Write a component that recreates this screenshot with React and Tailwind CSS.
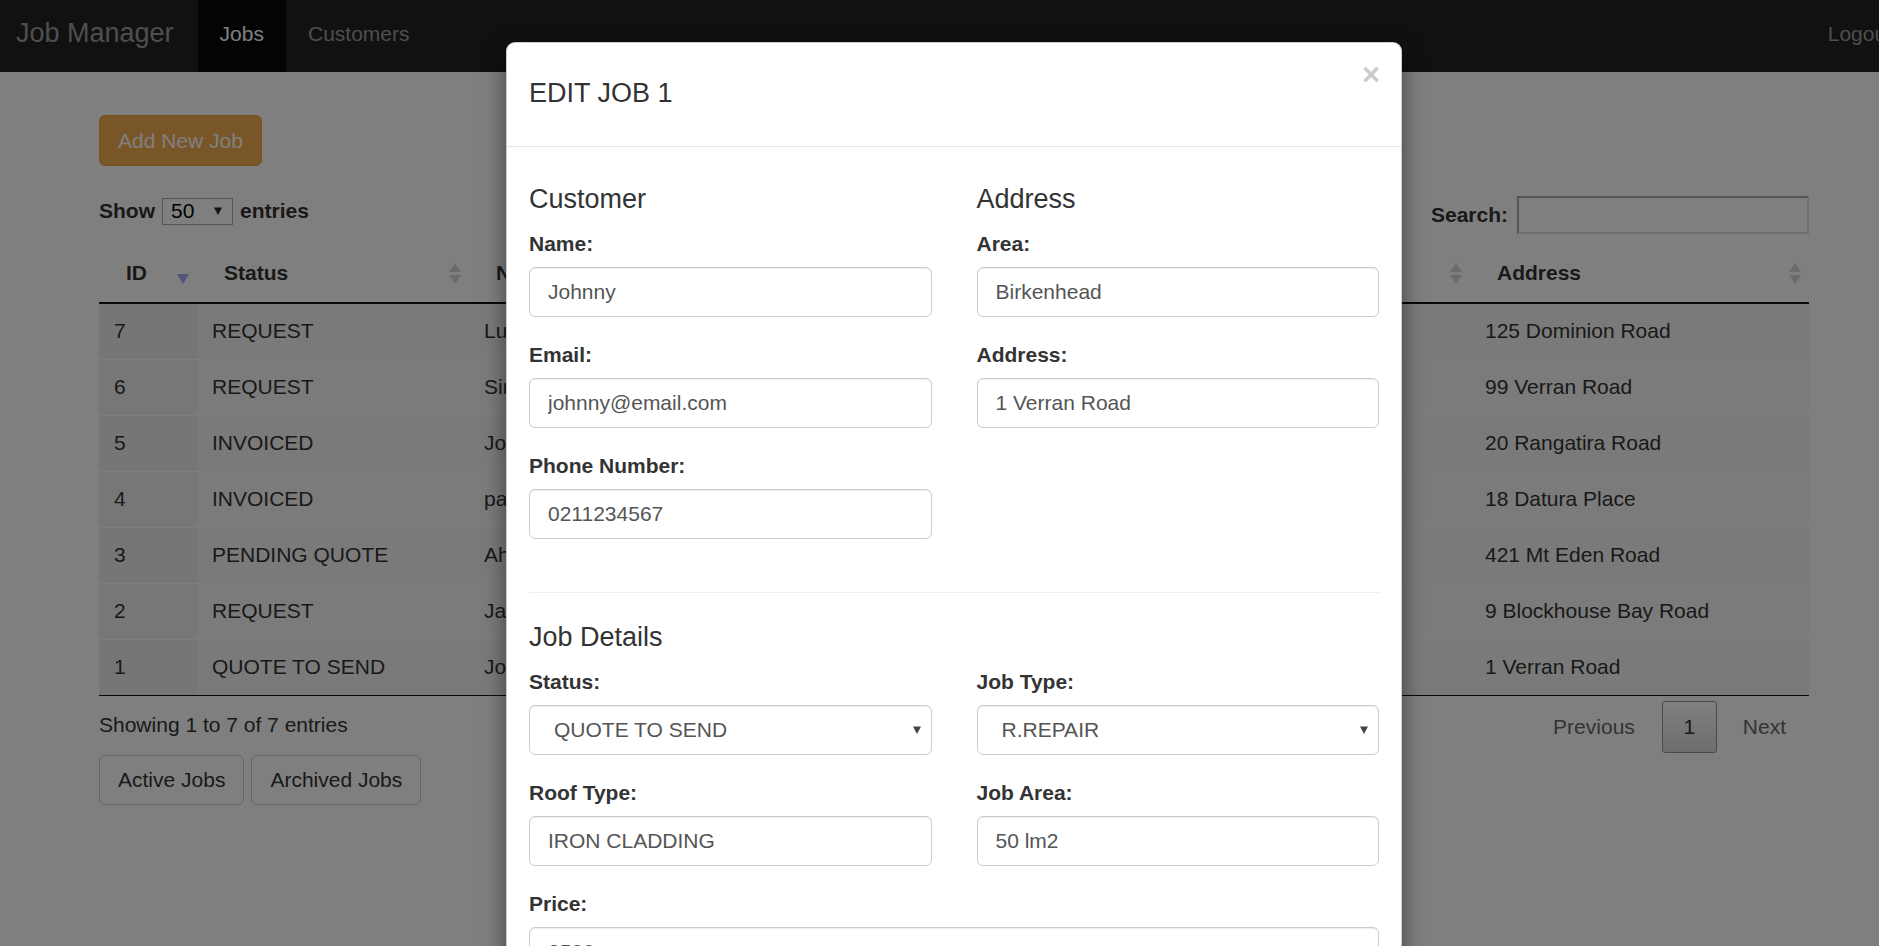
import React from "react";

const rows = [
  { id: 7, status: "REQUEST", name: "Luke Smith", email: "luke@email.com", phone: "0211112222", area: "Mt Eden", address: "125 Dominion Road" },
  { id: 6, status: "REQUEST", name: "Simon Lee", email: "simon@email.com", phone: "0213334444", area: "Avondale", address: "99 Verran Road" },
  { id: 5, status: "INVOICED", name: "John Brown", email: "john@email.com", phone: "0215556666", area: "Epsom", address: "20 Rangatira Road" },
  { id: 4, status: "INVOICED", name: "paul", email: "paul@email.com", phone: "0217778888", area: "Glenfield", address: "18 Datura Place" },
  { id: 3, status: "PENDING QUOTE", name: "Ahmed Khan", email: "ahmed@email.com", phone: "0219990000", area: "Mt Eden", address: "421 Mt Eden Road" },
  { id: 2, status: "REQUEST", name: "James Wong", email: "james@email.com", phone: "0211231231", area: "Blockhouse", address: "9 Blockhouse Bay Road" },
  { id: 1, status: "QUOTE TO SEND", name: "Johnny", email: "johnny@email.com", phone: "0211234567", area: "Birkenhead", address: "1 Verran Road" },
];

const columns = ["ID", "Status", "Name", "Email", "Phone", "Area", "Address"];
const gridCols = "grid grid-cols-[98px_272px_260px_280px_200px_261px_339px]";

function SortBoth() {
  return (
    <svg width="12" height="21" viewBox="0 0 12 21">
      <path d="M6 0 L12 9 H0 Z" fill="#d6d6d6" />
      <path d="M6 21 L12 12 H0 Z" fill="#d6d6d6" />
    </svg>
  );
}

function SortDesc() {
  return (
    <svg width="12" height="21" viewBox="0 0 12 21">
      <path d="M6 21 L12 11 H0 Z" fill="#a8a8f4" />
    </svg>
  );
}

function Caret({ color = "#333" }) {
  return (
    <svg width="8" height="8" viewBox="0 0 8 8" className="shrink-0">
      <path d="M0 0.5 H8 L4 8 Z" fill={color} />
    </svg>
  );
}

function Field({ label, value }) {
  return (
    <div className="mb-[24px]">
      <label className="block text-[21px] leading-[28px] font-bold mb-[9px] text-[#333]">{label}</label>
      <input
        readOnly
        value={value}
        className="block w-full h-[50px] px-[18px] text-[21px] text-[#555] bg-white border border-[#ccc] rounded-[6px] shadow-[inset_0_1px_1px_rgba(0,0,0,0.075)] outline-none font-['Liberation_Sans',Arial,sans-serif]"
      />
    </div>
  );
}

function SelectField({ label, value }) {
  return (
    <div className="mb-[24px]">
      <label className="block text-[21px] leading-[28px] font-bold mb-[9px] text-[#333]">{label}</label>
      <div className="flex items-center w-full h-[50px] pl-[24px] pr-[10px] text-[21px] text-[#555] bg-white border border-[#ccc] rounded-[6px] shadow-[inset_0_1px_1px_rgba(0,0,0,0.075)]">
        <span>{value}</span>
        <span className="ml-auto flex">
          <Caret color="#444" />
        </span>
      </div>
    </div>
  );
}

function Heading({ children, className = "" }) {
  return <h4 className={`text-[27px] leading-[30px] font-normal text-[#333] mb-[16px] ${className}`}>{children}</h4>;
}

function Navbar() {
  return (
    <nav className="h-[72px] bg-[#222] flex items-start">
      <a className="h-[72px] pl-[16px] pr-[24px] pt-[18px] text-[27px] leading-[30px] text-[#9d9d9d]">Job Manager</a>
      <a className="h-[72px] px-[22px] pt-[19px] bg-[#080808] text-white text-[21px] leading-[30px]">Jobs</a>
      <a className="h-[72px] px-[22px] pt-[19px] text-[#9d9d9d] text-[21px] leading-[30px]">Customers</a>
      <a className="h-[72px] ml-auto pl-[22px] pr-[16px] pt-[19px] text-[#9d9d9d] text-[21px] leading-[30px]">Logout</a>
    </nav>
  );
}

function JobsTable() {
  return (
    <div className="mt-[10px] text-[21px] text-[#333]">
      <div className={`${gridCols} h-[60px] border-b-2 border-[#111]`}>
        {columns.map((c, i) => (
          <div key={c} className="flex items-center pl-[27px] pr-[8px] font-bold">
            <span>{c}</span>
            <span className="ml-auto flex">{i === 0 ? <SortDesc /> : <SortBoth />}</span>
          </div>
        ))}
      </div>
      {rows.map((r, idx) => {
        const odd = idx % 2 === 0;
        const last = idx === rows.length - 1;
        return (
          <div
            key={r.id}
            className={`${gridCols} h-[56px] border-b ${last ? "border-[#111]" : "border-[#fdfdfd]"} ${odd ? "bg-[#f5f5f5]" : "bg-[#f7f7f7]"}`}
          >
            <div className={`flex items-center pl-[15px] pb-[1px] ${odd ? "bg-[#ececec]" : "bg-[#efefef]"}`}>{r.id}</div>
            <div className="flex items-center pl-[15px] pb-[1px]">{r.status}</div>
            <div className="flex items-center pl-[15px] pb-[1px]">{r.name}</div>
            <div className="flex items-center pl-[15px] pb-[1px]">{r.email}</div>
            <div className="flex items-center pl-[15px] pb-[1px]">{r.phone}</div>
            <div className="flex items-center pl-[15px] pb-[1px]">{r.area}</div>
            <div className="flex items-center pl-[15px] pb-[1px]">{r.address}</div>
          </div>
        );
      })}
    </div>
  );
}

function Modal() {
  return (
    <div className="w-[896px] bg-white border border-black/20 rounded-[9px] shadow-[0_7px_22px_rgba(0,0,0,0.5)] text-[#333]">
      <div className="relative h-[104px] border-b border-[#e5e5e5] px-[22px] pt-[35px]">
        <h4 className="text-[27px] leading-[30px] font-normal">EDIT JOB 1</h4>
        <button className="absolute top-[16px] right-[21px] text-[31px] leading-none font-bold text-black opacity-20">×</button>
      </div>
      <div className="px-[22px] pt-[37px]">
        <div className="grid grid-cols-2 gap-x-[45px]">
          <div>
            <Heading>Customer</Heading>
            <Field label="Name:" value="Johnny" />
            <Field label="Email:" value="johnny@email.com" />
            <Field label="Phone Number:" value="0211234567" />
          </div>
          <div>
            <Heading>Address</Heading>
            <Field label="Area:" value="Birkenhead" />
            <Field label="Address:" value="1 Verran Road" />
          </div>
        </div>
        <hr className="mt-[29px] border-0 border-t border-[#eee]" />
        <Heading className="mt-[29px]">Job Details</Heading>
        <div className="grid grid-cols-2 gap-x-[45px]">
          <SelectField label="Status:" value="QUOTE TO SEND" />
          <SelectField label="Job Type:" value="R.REPAIR" />
          <Field label="Roof Type:" value="IRON CLADDING" />
          <Field label="Job Area:" value="50 lm2" />
        </div>
        <Field label="Price:" value="2500" />
        <Field label="Notes:" value="" />
      </div>
    </div>
  );
}

export default function App() {
  return (
    <div className="relative w-full h-[946px] overflow-hidden bg-white font-['Liberation_Sans',Arial,Helvetica,sans-serif] text-[#333]">
      <div className="w-[1908px]">
        <Navbar />
        <main className="w-[1710px] mx-auto">
          <div className="pt-[43px]">
            <button className="h-[51px] px-[18px] bg-[#f0ad4e] border border-[#eea236] rounded-[6px] text-white text-[21px]">
              Add New Job
            </button>
          </div>

          <div className="mt-[30px] flex justify-between items-start">
            <div className="flex items-center h-[30px] text-[21px] font-bold">
              <span>Show</span>
              <div className="mx-[7px] w-[71px] h-[27px] border border-[#aaa] bg-white flex items-center pl-[8px] pr-[10px] font-normal text-black">
                <span>50</span>
                <span className="ml-auto flex">
                  <Caret color="#222" />
                </span>
              </div>
              <span>entries</span>
            </div>
            <div className="flex items-center h-[38px] text-[21px] font-bold">
              <span className="mr-[9px]">Search:</span>
              <div className="w-[292px] h-[38px] bg-white border-2 border-t-[#aaa] border-l-[#aaa] border-r-[#ddd] border-b-[#ddd]" />
            </div>
          </div>

          <JobsTable />

          <div className="flex justify-between items-start">
            <div>
              <div className="mt-[14px] text-[21px] leading-[30px]">Showing 1 to 7 of 7 entries</div>
              <div className="mt-[15px] flex gap-[7px]">
                <button className="h-[50px] px-[18px] border border-[#ccc] rounded-[6px] bg-white text-[21px] text-[#333]">Active Jobs</button>
                <button className="h-[50px] px-[18px] border border-[#ccc] rounded-[6px] bg-white text-[21px] text-[#333]">Archived Jobs</button>
              </div>
            </div>
            <div className="mt-[5px] flex items-center text-[21px]">
              <span className="h-[52px] flex items-center pl-[22px] pr-[24px] text-[#666]">Previous</span>
              <span className="ml-[3px] h-[52px] w-[55px] flex items-center justify-center border border-[#979797] rounded-[3px] bg-linear-to-b from-white to-[#dcdcdc] text-[#333]">1</span>
              <span className="ml-[3px] h-[52px] flex items-center pl-[23px] pr-[23px] text-[#666]">Next</span>
            </div>
          </div>
        </main>
      </div>

      <div className="absolute inset-0 bg-black/50" />

      <div className="absolute top-0 left-0 w-[1908px] h-full flex justify-center items-start pt-[42px]">
        <Modal />
      </div>
    </div>
  );
}
